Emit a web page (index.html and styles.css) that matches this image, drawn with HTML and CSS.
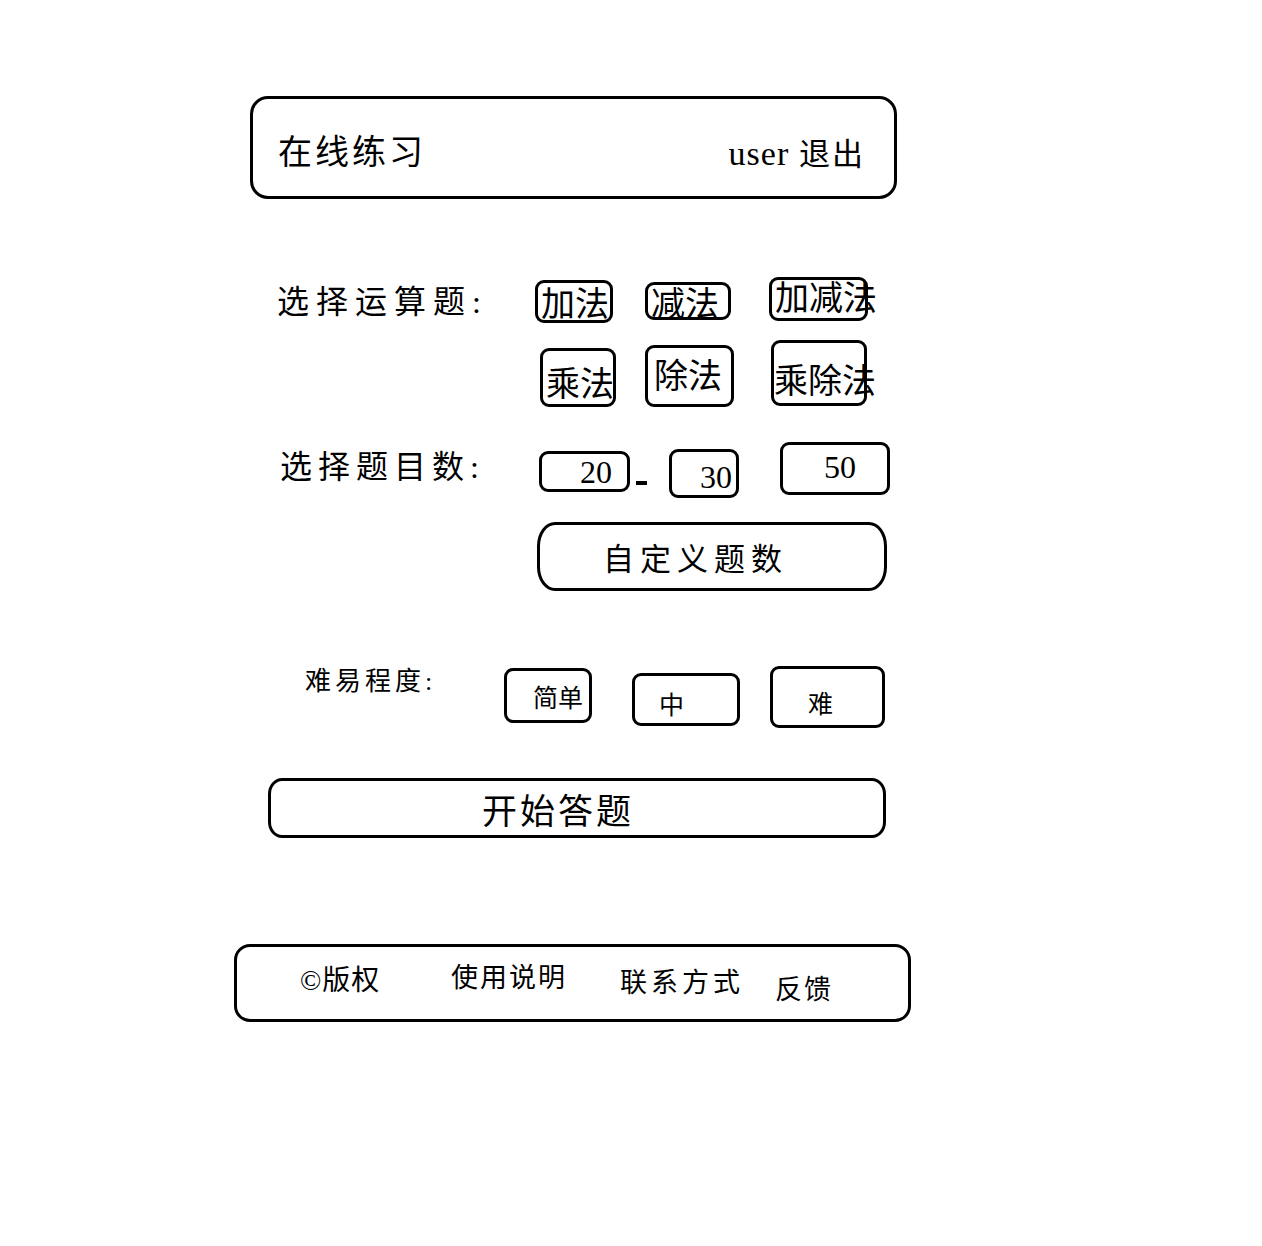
FILE: index.html
```html
<!DOCTYPE html>
<html lang="zh-CN">
<head>
    <meta charset="UTF-8">
    <title>在线练习</title>
    <link rel="stylesheet" href="styles.css">
</head>
<body>
    <div class="page">
        <header class="topbar">
            <div class="title">在线练习</div>
            <div class="user"><span class="user-name">user</span> 退出</div>
        </header>

        <!-- 运算类型 -->
        <div class="ops">
            <div class="field-label">选择运算题:</div>
            <div class="op-grid">
                <div class="opt op-add">加法</div>
                <div class="opt op-sub">减法</div>
                <div class="opt op-addsub">加减法</div>
                <div class="opt op-mul">乘法</div>
                <div class="opt op-div">除法</div>
                <div class="opt op-muldiv">乘除法</div>
            </div>
        </div>

        <!-- 题目数 -->
        <div class="counts">
            <div class="field-label count-label">选择题目数:</div>
            <div class="count-list">
                <div class="opt num n20">20</div>
                <div class="dash"></div>
                <div class="opt num n30">30</div>
                <div class="opt num n50">50</div>
            </div>
        </div>
        <div class="custom">自定义题数</div>

        <!-- 难度 -->
        <div class="level">
            <div class="level-label">难易程度:</div>
            <div class="opt lv lv-easy">简单</div>
            <div class="opt lv lv-mid">中</div>
            <div class="opt lv lv-hard">难</div>
        </div>

        <div class="start">开始答题</div>

        <footer class="footer">
            <div class="foot-item f1">©版权</div>
            <div class="foot-item f2">使用说明</div>
            <div class="foot-item f3">联系方式</div>
            <div class="foot-item f4">反馈</div>
        </footer>
    </div>
</body>
</html>
```

FILE: styles.css
```css
body {
    margin: 0;
    padding: 0;
    background-color: #fff;
    color: #000;
    font-family: "Liberation Serif", "Noto Sans CJK SC", serif;
}
.page {
    padding: 96px 0 0 234px;
    width: 677px;
}
.topbar {
    width: 647px;
    height: 103px;
    margin-left: 16px;
    border: 3px solid #000;
    border-radius: 18px;
    box-sizing: border-box;
    display: flex;
    align-items: center;
    justify-content: space-between;
    padding: 0 29px 0 25px;
}
.title {
    font-size: 34px;
    letter-spacing: 3px;
    margin-top: 4px;
}
.user {
    font-size: 31px;
    letter-spacing: 2px;
    margin-top: 8px;
}
.user-name {
    font-size: 34px;
    letter-spacing: 1px;
}

.opt {
    border: 3px solid #000;
    border-radius: 9px;
    box-sizing: border-box;
    display: flex;
    align-items: center;
    white-space: nowrap;
    overflow: visible;
}

/* 运算类型 */
.ops {
    display: flex;
    margin-top: 78px;
}
.field-label {
    width: 258px;
    margin-left: 43px;
    font-size: 32px;
    letter-spacing: 7px;
    line-height: 50px;
}
.op-grid {
    display: grid;
    grid-template-columns: 110px 124px auto;
    row-gap: 17px;
    align-items: start;
}
.op-grid .opt {
    font-size: 34px;
    padding-left: 3px;
}
.op-add { width: 78px; height: 43px; margin-top: 3px; }
.op-sub { width: 86px; height: 38px; margin-top: 5px; }
.op-addsub { width: 99px; height: 44px; align-items: flex-start; line-height: 38px; }
.op-mul { width: 76px; height: 59px; margin: 8px 0 0 5px; padding-top: 8px; }
.op-div { width: 89px; height: 62px; margin-top: 5px; padding-bottom: 6px; padding-left: 6px !important; }
.op-muldiv { width: 96px; height: 66px; margin-left: 2px; padding-top: 10px; padding-left: 0 !important; }

/* 题目数 */
.counts {
    display: flex;
    margin-top: 35px;
}
.count-label {
    margin-left: 46px;
    width: 259px;
    letter-spacing: 6px;
}
.count-list {
    display: flex;
    align-items: flex-start;
}
.num {
    font-size: 32px;
    line-height: 32px;
}
.n20 { width: 91px; height: 41px; margin-top: 9px; justify-content: flex-end; padding-right: 15px; }
.dash {
    width: 11px;
    height: 4px;
    background-color: #000;
    margin: 39px 0 0 6px;
}
.n30 { width: 70px; height: 49px; margin: 7px 0 0 22px; justify-content: flex-end; align-items: flex-end; padding: 0 4px 2px 0; }
.n50 { width: 110px; height: 53px; margin-left: 41px; justify-content: center; align-items: flex-start; padding: 6px 0 0 10px; }

.custom {
    width: 350px;
    height: 69px;
    margin: 24px 0 0 303px;
    border: 3px solid #000;
    border-radius: 18px / 24px;
    box-sizing: border-box;
    display: flex;
    align-items: center;
    padding-left: 63px;
    font-size: 31px;
    letter-spacing: 6px;
}

/* 难度 */
.level {
    display: flex;
    align-items: flex-start;
    margin-top: 75px;
}
.level-label {
    margin-left: 71px;
    width: 199px;
    font-size: 26px;
    letter-spacing: 4px;
    line-height: 32px;
}
.lv {
    font-size: 25px;
}
.lv-easy { width: 88px; height: 55px; margin-top: 2px; padding-left: 26px; }
.lv-mid { width: 108px; height: 53px; margin: 7px 0 0 40px; padding: 6px 0 0 24px; }
.lv-hard { width: 115px; height: 62px; margin-left: 30px; padding: 10px 0 0 35px; }

.start {
    width: 618px;
    height: 60px;
    margin: 50px 0 0 34px;
    border: 3px solid #000;
    border-radius: 14px / 16px;
    box-sizing: border-box;
    display: flex;
    align-items: center;
    padding-left: 211px;
    font-size: 35px;
    letter-spacing: 3px;
}

.footer {
    width: 677px;
    height: 78px;
    margin-top: 106px;
    border: 3px solid #000;
    border-radius: 16px;
    box-sizing: border-box;
    display: flex;
    align-items: flex-start;
    padding-left: 63px;
}
.foot-item {
    font-size: 27px;
    line-height: 30px;
    letter-spacing: 2px;
}
.f1 { width: 151px; margin-top: 19px; letter-spacing: 1px; font-size: 28px; }
.f2 { width: 169px; margin-top: 16px; }
.f3 { width: 155px; margin-top: 21px; letter-spacing: 4px; }
.f4 { margin-top: 28px; }
```
